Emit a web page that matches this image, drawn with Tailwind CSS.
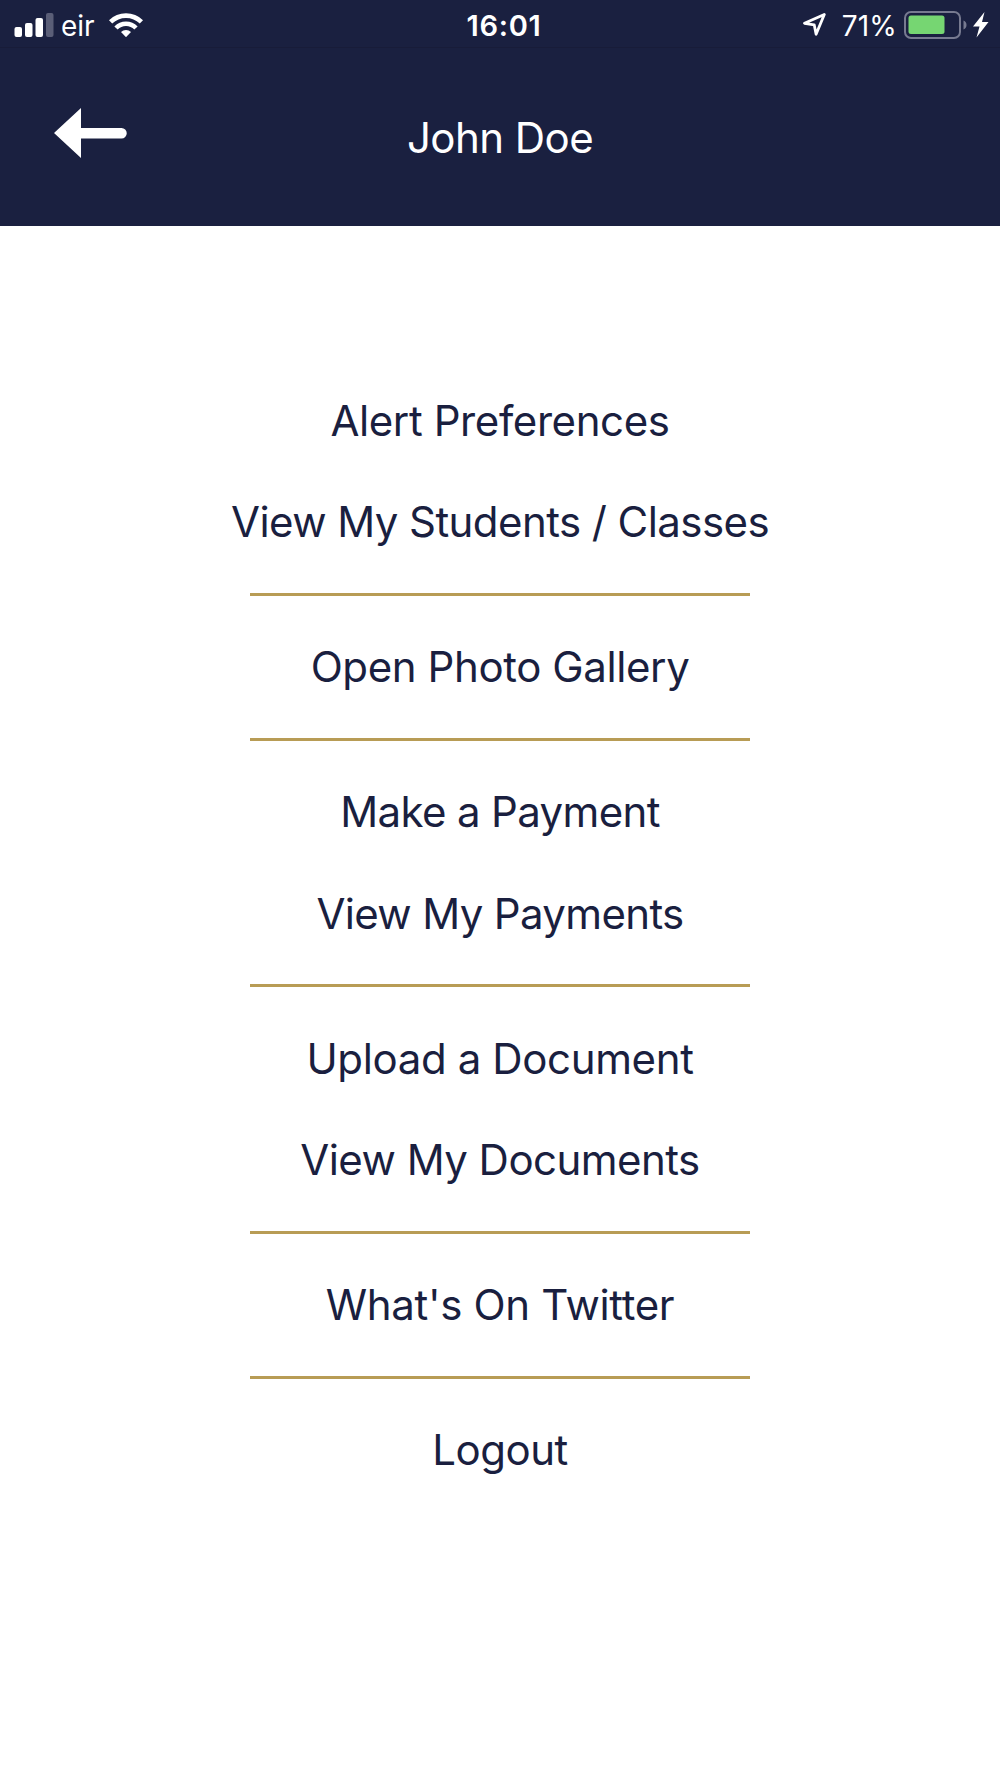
<!DOCTYPE html>
<html lang="en">
<head>
    <meta charset="UTF-8">
    <meta name="viewport" content="width=device-width, initial-scale=1.0">
    <title>John Doe</title>
    <script src="https://cdn.jsdelivr.net/npm/@tailwindcss/browser@4"></script>
</head>
<body class="min-h-screen bg-white font-['Inter',sans-serif] text-[#1a1f3f]">
    <header class="h-[226px] bg-[#1a2040] text-white">
        <!-- Status bar -->
        <div class="grid h-12 grid-cols-3 items-center border-b border-[#181c39] pt-0.5">
            <div class="flex items-center pl-3.5">
                <svg class="h-6 w-10" viewBox="0 0 40 24" fill="#fff">
                    <rect x="0.5" y="14" width="7.5" height="10" rx="2"/>
                    <rect x="11" y="10" width="7.5" height="14" rx="2"/>
                    <rect x="21.5" y="5" width="7.5" height="19" rx="2"/>
                    <rect x="32" y="0" width="7.5" height="24" rx="2" fill="#5a5e77"/>
                </svg>
                <span class="ml-[7px] pt-0.5 text-[28px] leading-none">eir</span>
                <svg class="ml-3.5 h-6 w-[34px]" viewBox="0 0 34 24" fill="none" stroke="#fff" stroke-width="4.6">
                    <path d="M1.6 8.9a22 22 0 0 1 30.8 0"/>
                    <path d="M7 15a14 14 0 0 1 20 0"/>
                    <path d="M17 24.2l-5-5.2a7.2 7.2 0 0 1 10 0z" fill="#fff" stroke="none"/>
                </svg>
            </div>
            <div class="pt-0.5 pl-2 text-center text-[29px] leading-none font-semibold tracking-[0.7px]">16:01</div>
            <div class="flex items-center justify-end pr-[11px]">
                <svg class="h-[23px] w-[23px]" viewBox="0 0 23 23" fill="none" stroke="#fff" stroke-width="2.8" stroke-linejoin="round">
                    <path d="M21.3 1.5L1.5 10.3l9.7 1.500 1.900 9.500z"/>
                </svg>
                <span class="ml-4 pt-0.5 text-[28px] leading-none tracking-[0.2px]">71%</span>
                <svg class="ml-[7px] h-7 w-[63px]" viewBox="0 0 63 28">
                    <rect x="1" y="1" width="55" height="26" rx="6" fill="none" stroke="#777a90" stroke-width="2"/>
                    <rect x="4.5" y="4.5" width="36" height="18.5" rx="2.5" fill="#76d672"/>
                    <path d="M59.5 9.5c4 1.5 4 7.5 0 9z" fill="#777a90"/>
                </svg>
                <svg class="ml-1.5 h-[26px] w-4" viewBox="0 0 16 26" fill="#fff">
                    <path d="M11.5 0L0 14.5h6.5L3.5 25.5 15.5 10H9z"/>
                </svg>
            </div>
        </div>

        <!-- Title bar -->
        <div class="grid grid-cols-[1fr_auto_1fr] items-center pt-[59px]">
            <a href="#" class="-mt-2.5 ml-[54px]">
                <svg class="h-[50px] w-[73px]" viewBox="0 0 73 50" fill="#fff">
                    <path d="M0 25L27 0v20h40.5a5 5 0 0 1 0 10.5H27V50z"/>
                </svg>
            </a>
            <h1 class="text-[42px] leading-[62px] tracking-[-0.55px]">John Doe</h1>
        </div>
    </header>

    <!-- Menu -->
    <nav class="flex flex-col items-center pt-[143.6px] text-[42px] leading-[101.5px] whitespace-nowrap">
        <a href="#" class="tracking-[-0.4px]">Alert Preferences</a>
        <a href="#" class="tracking-[-0.57px]">View My Students / Classes</a>
        <hr class="my-[20.25px] h-[3px] w-[500px] border-0 bg-[#b89c55]">
        <a href="#" class="tracking-[-0.4px]">Open Photo Gallery</a>
        <hr class="my-[20.25px] h-[3px] w-[500px] border-0 bg-[#b89c55]">
        <a href="#" class="tracking-[-0.65px]">Make a Payment</a>
        <a href="#" class="tracking-[-0.65px]">View My Payments</a>
        <hr class="my-[20.25px] h-[3px] w-[500px] border-0 bg-[#b89c55]">
        <a href="#" class="tracking-[-0.37px]">Upload a Document</a>
        <a href="#" class="tracking-[-0.53px]">View My Documents</a>
        <hr class="my-[20.25px] h-[3px] w-[500px] border-0 bg-[#b89c55]">
        <a href="#" class="tracking-[-0.33px]">What's On Twitter</a>
        <hr class="my-[20.25px] h-[3px] w-[500px] border-0 bg-[#b89c55]">
        <a href="#" class="tracking-[-0.5px]">Logout</a>
    </nav>
</body>
</html>
